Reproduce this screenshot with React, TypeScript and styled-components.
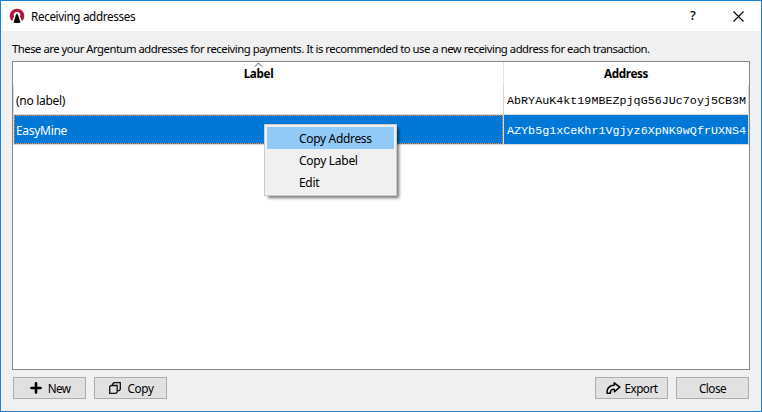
import React from 'react';
import styled, { createGlobalStyle } from 'styled-components';

const Global = createGlobalStyle`
  * { box-sizing: border-box; }
  body { margin: 0; background: #f0f0f0; }
`;

const Window = styled.div`
  width: 762px;
  height: 412px;
  display: flex;
  flex-direction: column;
  border: 1px solid #1883d7;
  background: #f0f0f0;
  color: #000;
  font: 12px/15px 'Noto Sans', sans-serif;
  white-space: nowrap;
  cursor: default;
`;

const TitleBar = styled.header`
  height: 30px;
  flex: none;
  display: flex;
  align-items: center;
  padding: 0 17px 0 8px;
  background: #fff;
`;

const Title = styled.h1`
  flex: 1;
  margin: 0 0 0 6px;
  font-size: 11.7px;
  font-weight: 400;
  letter-spacing: -0.36px;
`;

const HelpMark = styled.span`
  width: 8px;
  margin: -2px 35px 0 0;
  font: 500 13px/16px 'Noto Sans', sans-serif;
`;

const Content = styled.main`
  flex: 1;
  display: flex;
  flex-direction: column;
  padding: 10px 11px 12px;
`;

const Intro = styled.p`
  margin: 0 0 5px;
  height: 15px;
  font-size: 11.3px;
  letter-spacing: -0.49px;
`;

const Table = styled.section`
  position: relative;
  height: 309px;
  flex: none;
  border: 1px solid #828790;
  background: #fff;
`;

const Row = styled.div`
  display: grid;
  grid-template-columns: 490px 1fr;
  height: 30px;
  border-left: 1px solid #d8d8d8;
`;

const HeaderRow = styled(Row)`
  height: 23px;
  border-left-color: #fff;
`;

const HeaderCell = styled.div<{ $divided?: boolean }>`
  position: relative;
  padding-top: 4px;
  text-align: center;
  font-size: 11.7px;
  font-weight: 700;
  letter-spacing: -0.35px;
  border-right: 1px solid ${(p) => (p.$divided ? '#e5e5e5' : '#fff')};
`;

const SortArrow = styled.svg`
  position: absolute;
  top: 0;
  left: 240px;
`;

const Cell = styled.div<{ $selected?: boolean; $mono?: boolean }>`
  display: flex;
  align-items: center;
  padding-top: ${(p) => (p.$mono ? 3 : 2)}px;
  padding-left: ${(p) => (p.$mono ? 3 : 2)}px;
  border-right: 1px solid #d8d8d8;
  border-bottom: 1px solid #d8d8d8;
  color: ${(p) => (p.$selected ? '#fff' : '#000')};
  background: ${(p) => (p.$selected ? '#0078d7' : '#fff')};
  font-family: ${(p) => (p.$mono ? "'Liberation Mono', 'Courier New', monospace" : 'inherit')};
  font-size: ${(p) => (p.$mono ? '11.7px' : '12px')};
  letter-spacing: ${(p) => (p.$mono ? '0.02px' : '-0.3px')};
`;

const FocusCell = styled(Cell)`
  padding: 0;
`;

const FocusRing = styled.div`
  flex: 1;
  height: 29px;
  display: flex;
  align-items: center;
  padding: 1px 0 0 1px;
  border: 1px dotted #ff8728;
`;

const Menu = styled.div`
  position: absolute;
  top: 62px;
  left: 251px;
  width: 133px;
  height: 72px;
  padding: 2px;
  border: 1px solid #ccc;
  background: #f0f0f0;
  box-shadow: 3px 3px 3px -1px rgba(0, 0, 0, 0.55);
`;

const MenuItem = styled.div<{ $active?: boolean; $spacing: number }>`
  height: 22px;
  padding-left: 32px;
  font: 12px/24px 'Noto Sans', sans-serif;
  letter-spacing: ${(p) => p.$spacing}px;
  background: ${(p) => (p.$active ? '#91c9f7' : 'transparent')};
`;

const Footer = styled.footer`
  display: flex;
  gap: 8px;
  padding: 7px 1px 0;
`;

const Spacer = styled.div`
  flex: 1;
`;

const Button = styled.button<{ $gap?: number; $spacing: number; $shift?: number }>`
  display: flex;
  align-items: center;
  justify-content: center;
  gap: ${(p) => p.$gap ?? 6}px;
  width: 73px;
  height: 22px;
  padding: 1px 0 0 ${(p) => p.$shift ?? 0}px;
  border: 1px solid #adadad;
  background: #e1e1e1;
  color: #000;
  font: 11.7px/15px 'Noto Sans', sans-serif;
  letter-spacing: ${(p) => p.$spacing}px;

  svg { margin-top: -1px; }
`;

const Logo = () => (
  <svg width="16" height="16" viewBox="0 0 16 16">
    <path d="M3 13.3A7.3 7.3 0 1 1 13 13.3L10.8 8.5A3.2 3.2 0 1 0 5.2 8.5Z" fill="#b31b3c" />
    <path d="M8 3.9L9.6 5.2 13.3 15Q8 16.3 2.7 15L6.4 5.2Z" fill="#fff" />
    <path d="M8 5.3L9.1 7.2 11.5 14.4Q8 15.6 4.5 14.4L6.9 7.2Z" fill="#080808" />
  </svg>
);

const CloseIcon = () => (
  <svg width="11" height="11" viewBox="0 0 11 11">
    <path d="M.5.5l10 10M10.5.5l-10 10" stroke="#000" strokeWidth="1.1" />
  </svg>
);

const PlusIcon = () => (
  <svg width="12" height="12" viewBox="0 0 12 12">
    <path d="M6 1.4v9.2M1.4 6h9.2" stroke="#000" strokeWidth="2.6" strokeLinecap="round" />
  </svg>
);

const CopyIcon = () => (
  <svg width="12" height="12" viewBox="0 0 12 12" fill="none" stroke="#111" strokeWidth="1.3">
    <path d="M3.6 3.4V2L5 .7h6.3v6.7L10 8.7H8.2" />
    <path d="M.7 4.7l1.2-1.2h6.3v6.6L7 11.3H.7z" />
  </svg>
);

const ExportIcon = () => (
  <svg width="15" height="12" viewBox="0 0 15 12">
    <path
      d="M8.2.8L13.8 5.1 8.4 9.7V7.4C5.8 7.1 4.4 8.2 4.4 11.2H1.2C.3 6.4 3.5 3.2 8.2 3.2Z"
      fill="#e8e8e8" stroke="#000" strokeWidth="1.5" strokeLinejoin="round"
    />
  </svg>
);

export default function App() {
  return (
    <>
      <Global />
      <Window>
        <TitleBar>
          <Logo />
          <Title>Receiving addresses</Title>
          <HelpMark>?</HelpMark>
          <CloseIcon />
        </TitleBar>
        <Content>
          <Intro>
            These are your Argentum addresses for receiving payments. It is recommended to use a new
            receiving address for each transaction.
          </Intro>
          <Table>
            <HeaderRow>
              <HeaderCell $divided>
                <SortArrow width="9" height="5" viewBox="0 0 9 5">
                  <path d="M1 4.5L4.5 1 8 4.5" fill="none" stroke="#555" />
                </SortArrow>
                Label
              </HeaderCell>
              <HeaderCell>Address</HeaderCell>
            </HeaderRow>
            <Row>
              <Cell>(no label)</Cell>
              <Cell $mono>AbRYAuK4kt19MBEZpjqG56JUc7oyj5CB3M</Cell>
            </Row>
            <Row>
              <FocusCell $selected>
                <FocusRing>EasyMine</FocusRing>
              </FocusCell>
              <Cell $selected $mono>AZYb5g1xCeKhr1Vgjyz6XpNK9wQfrUXNS4</Cell>
            </Row>
            <Menu>
              <MenuItem $active $spacing={-0.33}>Copy Address</MenuItem>
              <MenuItem $spacing={-0.28}>Copy Label</MenuItem>
              <MenuItem $spacing={-0.3}>Edit</MenuItem>
            </Menu>
          </Table>
          <Footer>
            <Button $spacing={-0.65} $shift={1}><PlusIcon />New</Button>
            <Button $spacing={-0.3} $shift={2}><CopyIcon />Copy</Button>
            <Spacer />
            <Button $gap={4} $spacing={-0.5}><ExportIcon />Export</Button>
            <Button $spacing={-0.5}>Close</Button>
          </Footer>
        </Content>
      </Window>
    </>
  );
}
